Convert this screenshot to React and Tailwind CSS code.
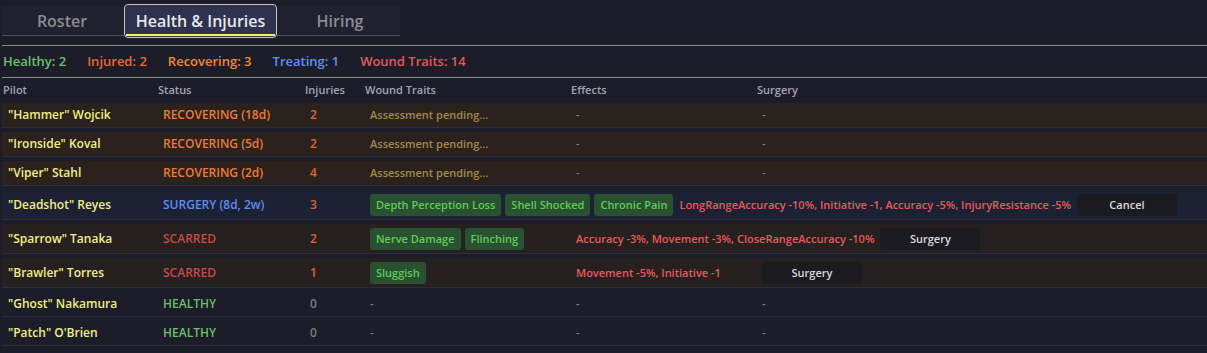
import React from "react";

const rows = [
  { name: '"Hammer" Wojcik', status: "RECOVERING (18d)", kind: "recovering", inj: "2", pending: true },
  { name: '"Ironside" Koval', status: "RECOVERING (5d)", kind: "recovering", inj: "2", pending: true },
  { name: '"Viper" Stahl', status: "RECOVERING (2d)", kind: "recovering", inj: "4", pending: true },
  {
    name: '"Deadshot" Reyes',
    status: "SURGERY (8d, 2w)",
    kind: "surgery",
    inj: "3",
    traits: ["Depth Perception Loss", "Shell Shocked", "Chronic Pain"],
    effects: "LongRangeAccuracy -10%, Initiative -1, Accuracy -5%, InjuryResistance -5%",
    button: "Cancel",
  },
  {
    name: '"Sparrow" Tanaka',
    status: "SCARRED",
    kind: "scarred",
    inj: "2",
    traits: ["Nerve Damage", "Flinching"],
    effects: "Accuracy -3%, Movement -3%, CloseRangeAccuracy -10%",
    button: "Surgery",
  },
  {
    name: '"Brawler" Torres',
    status: "SCARRED",
    kind: "scarred",
    inj: "1",
    traits: ["Sluggish"],
    effects: "Movement -5%, Initiative -1",
    button: "Surgery",
  },
  { name: '"Ghost" Nakamura', status: "HEALTHY", kind: "healthy", inj: "0" },
  { name: '"Patch" O\'Brien', status: "HEALTHY", kind: "healthy", inj: "0" },
];

const rowBg = {
  recovering: "bg-[#2b221e]",
  surgery: "bg-[#1c2134]",
  scarred: "bg-[#262120]",
  healthy: "",
};

const statusColor = {
  recovering: "text-[#f07a34]",
  surgery: "text-[#5c8ff0]",
  scarred: "text-[#c84a4a]",
  healthy: "text-[#6fbf6f]",
};

function Row({ r }) {
  const chips = !!r.traits;
  return (
    <div
      className={`flex items-center gap-[6px] pl-[6px] border-b border-[#2b2e42] ${rowBg[r.kind]} ${
        chips ? "h-[30px]" : "h-[25px]"
      }`}
    >
      <div className="w-[149px] shrink-0 text-[12px] leading-[18px] text-[#f2ef86] whitespace-nowrap">{r.name}</div>
      <div className={`w-[141px] shrink-0 text-[12px] leading-[18px] whitespace-nowrap ${statusColor[r.kind]}`}>
        {r.status}
      </div>
      <div
        className={`w-[54px] shrink-0 text-[12px] leading-[18px] ${
          r.inj === "0" ? "text-[#7c7c84]" : "text-[#e0623a]"
        }`}
      >
        {r.inj}
      </div>
      <div className="min-w-[200px] shrink-0 flex items-center gap-[4px] text-[11px] leading-[16px]">
        {r.pending && <span className="text-[#a28a4c] whitespace-nowrap">Assessment pending...</span>}
        {r.traits &&
          r.traits.map((t) => (
            <span
              key={t}
              className="h-[22px] px-[6px] flex items-center rounded-[3px] bg-[#2a5230] text-[#5fcc5c] whitespace-nowrap"
            >
              {t}
            </span>
          ))}
        {!r.pending && !r.traits && <span className="text-[#7c7c84]">-</span>}
      </div>
      <div className="min-w-[180px] shrink-0 whitespace-nowrap text-[11px] leading-[16px]">
        {r.effects ? (
          <span className="text-[#e85a5a]">{r.effects}</span>
        ) : (
          <span className="text-[#7c7c84]">-</span>
        )}
      </div>
      <div className="shrink-0 text-[11px] leading-[16px]">
        {r.button ? (
          <div className="w-[100px] h-[22px] flex items-center justify-center rounded-[3px] bg-[#1b1b21] text-[#dcdcdc]">
            {r.button}
          </div>
        ) : (
          <span className="text-[#7c7c84]">-</span>
        )}
      </div>
    </div>
  );
}

export default function App() {
  return (
    <div
      className="w-[1207px] h-[353px] overflow-hidden bg-[#1d1d29] pt-[4px] font-semibold"
      style={{ fontFamily: '"Open Sans", "Noto Sans", sans-serif' }}
    >
      {/* Tabs */}
      <div className="flex items-stretch h-[34px] pl-[2px]">
        <div className="w-[120px] my-[2px] flex items-center justify-center bg-[#212130] border-b border-[#4d4a6c] text-[16px] text-[#8c8c92]">
          Roster
        </div>
        <div className="w-[2px] my-[2px] bg-[#212130] border-b border-[#4d4a6c]" />
        <div className="relative w-[153px] flex items-center justify-center rounded-[4px] border-[1.5px] border-[#c4c4c8] bg-[#2f3350] text-[16px] text-[#e8e8ec]">
          Health &amp; Injuries
          <div className="absolute left-[1px] right-[1px] bottom-[1px] h-[2px] bg-[#f4f060]" />
        </div>
        <div className="w-[3px] my-[2px] bg-[#212130] border-b border-[#4d4a6c]" />
        <div className="w-[120px] my-[2px] flex items-center justify-center bg-[#212130] border-b border-[#4d4a6c] text-[16px] text-[#8c8c92]">
          Hiring
        </div>
      </div>

      <div className="mt-[7px] ml-[2px] h-px bg-[#8c8c90]" />

      {/* Stats */}
      <div className="flex items-center gap-[21px] h-[31px] pl-[3px] text-[13px]">
        <span className="text-[#6fc06f]">Healthy: 2</span>
        <span className="text-[#e66a3a]">Injured: 2</span>
        <span className="text-[#f08a38]">Recovering: 3</span>
        <span className="text-[#6191f2]">Treating: 1</span>
        <span className="text-[#e25a5a]">Wound Traits: 14</span>
      </div>

      <div className="ml-[2px] h-px bg-[#8c8c90]" />

      {/* Header */}
      <div className="flex items-center gap-[6px] h-[25px] pl-[3px] text-[11px] text-[#a4a4b4]">
        <div className="w-[149px] shrink-0">Pilot</div>
        <div className="w-[141px] shrink-0">Status</div>
        <div className="w-[54px] shrink-0">Injuries</div>
        <div className="w-[200px] shrink-0">Wound Traits</div>
        <div className="w-[180px] shrink-0">Effects</div>
        <div className="shrink-0">Surgery</div>
      </div>

      {/* Rows */}
      <div className="flex flex-col gap-[4px] ml-[2px]">
        {rows.map((r) => (
          <Row key={r.name} r={r} />
        ))}
      </div>
    </div>
  );
}
